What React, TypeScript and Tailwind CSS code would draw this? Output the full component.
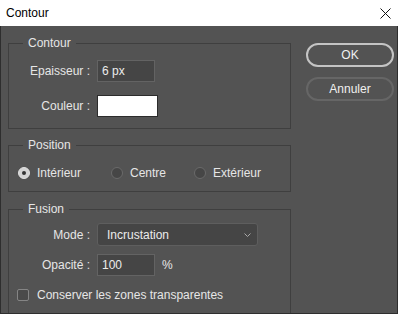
import React from "react";

const label = "w-[82px] shrink-0 text-right pr-px";
const field = "h-[22px] bg-[#454545] border border-[#636363] text-[#ececec] flex items-center pl-[4px]";

function Radio({ checked, text, width }: { checked?: boolean; text: string; width: string }) {
  return (
    <div className={`flex items-center gap-[7px] ${width}`}>
      {checked ? (
        <span className="w-[12px] h-[12px] rounded-full bg-[#d4d4d4] border border-[#e0e0e0] flex items-center justify-center">
          <span className="w-[4px] h-[4px] rounded-full bg-[#333333]" />
        </span>
      ) : (
        <span className="w-[12px] h-[12px] rounded-full bg-[#464646] border border-[#6a6a6a]" />
      )}
      <span>{text}</span>
    </div>
  );
}

export default function App() {
  return (
    <div className="w-[398px] h-[314px] bg-white flex flex-col overflow-hidden font-['Liberation_Sans',Arial,sans-serif] text-[12px] leading-[16px]">
      {/* Title bar */}
      <div className="h-[26px] shrink-0 flex items-center justify-between pl-[6px] pr-[4px] text-black">
        <span className="text-[12px]">Contour</span>
        <svg width="11" height="11" viewBox="0 0 11 11" className="mr-[3px]">
          <path d="M0.5 0.5 L10.5 10.5 M10.5 0.5 L0.5 10.5" stroke="#111" strokeWidth="1" />
        </svg>
      </div>

      {/* Body */}
      <div className="flex-1 bg-[#535353] border-x border-b border-[#2e2e2e] flex overflow-hidden pl-[7px] pt-[9px] text-[#e6e6e6]">
        <div className="w-[283px] shrink-0 flex flex-col">
          <fieldset className="border border-[#3f3f3f] pb-[11px]">
            <legend className="ml-[14px] px-[5px] leading-[16px]">Contour</legend>
            <div className="flex flex-col gap-[13px] pt-[9px]">
              <div className="flex items-center gap-[6px]">
                <span className={label}>Epaisseur :</span>
                <div className={`${field} w-[58px]`}>6 px</div>
              </div>
              <div className="flex items-center gap-[6px]">
                <span className={label}>Couleur :</span>
                <div className="w-[61px] h-[22px] bg-white border border-[#2c2c2c]" />
              </div>
            </div>
          </fieldset>

          <fieldset className="border border-[#3f3f3f] mt-[8px] pb-[8px]">
            <legend className="ml-[14px] px-[5px] leading-[16px]">Position</legend>
            <div className="flex items-center h-[20px] mt-[10px] pl-[9px]">
              <Radio checked text="Intérieur" width="w-[93px]" />
              <Radio text="Centre" width="w-[83px]" />
              <Radio text="Extérieur" width="w-[90px]" />
            </div>
          </fieldset>

          <fieldset className="border border-[#3f3f3f] mt-[9px] pb-[20px]">
            <legend className="ml-[14px] px-[5px] leading-[16px]">Fusion</legend>
            <div className="flex flex-col pt-[6px]">
              <div className="flex items-center gap-[6px]">
                <span className={label}>Mode :</span>
                <div className="w-[161px] h-[23px] rounded-[3px] bg-[#454545] border border-[#5e5e5e] flex items-center justify-between pl-[9px] pr-[6px] text-[#ececec]">
                  <span>Incrustation</span>
                  <svg width="7" height="4" viewBox="0 0 7 4">
                    <path d="M0.5 0.5 L3.5 3.5 L6.5 0.5" stroke="#a8a8a8" strokeWidth="1" fill="none" />
                  </svg>
                </div>
              </div>
              <div className="flex items-center gap-[6px] mt-[8px]">
                <span className={label}>Opacité :</span>
                <div className={`${field} w-[58px]`}>100</div>
                <span className="ml-px">%</span>
              </div>
              <div className="flex items-center gap-[8px] mt-[10px] pl-[8px] h-[18px]">
                <span className="w-[12px] h-[12px] rounded-[2px] bg-[#4a4a4a] border border-[#858585]" />
                <span>Conserver les zones transparentes</span>
              </div>
            </div>
          </fieldset>
        </div>

        <div className="ml-[15px] pt-[8px] flex flex-col gap-[10px]">
          <button className="w-[88px] h-[24px] rounded-full border-2 border-[#c4c4c4] text-[#f0f0f0] flex items-center justify-center">
            OK
          </button>
          <button className="w-[88px] h-[24px] rounded-full border-2 border-[#666666] text-[#f0f0f0] flex items-center justify-center">
            Annuler
          </button>
        </div>
      </div>
    </div>
  );
}
